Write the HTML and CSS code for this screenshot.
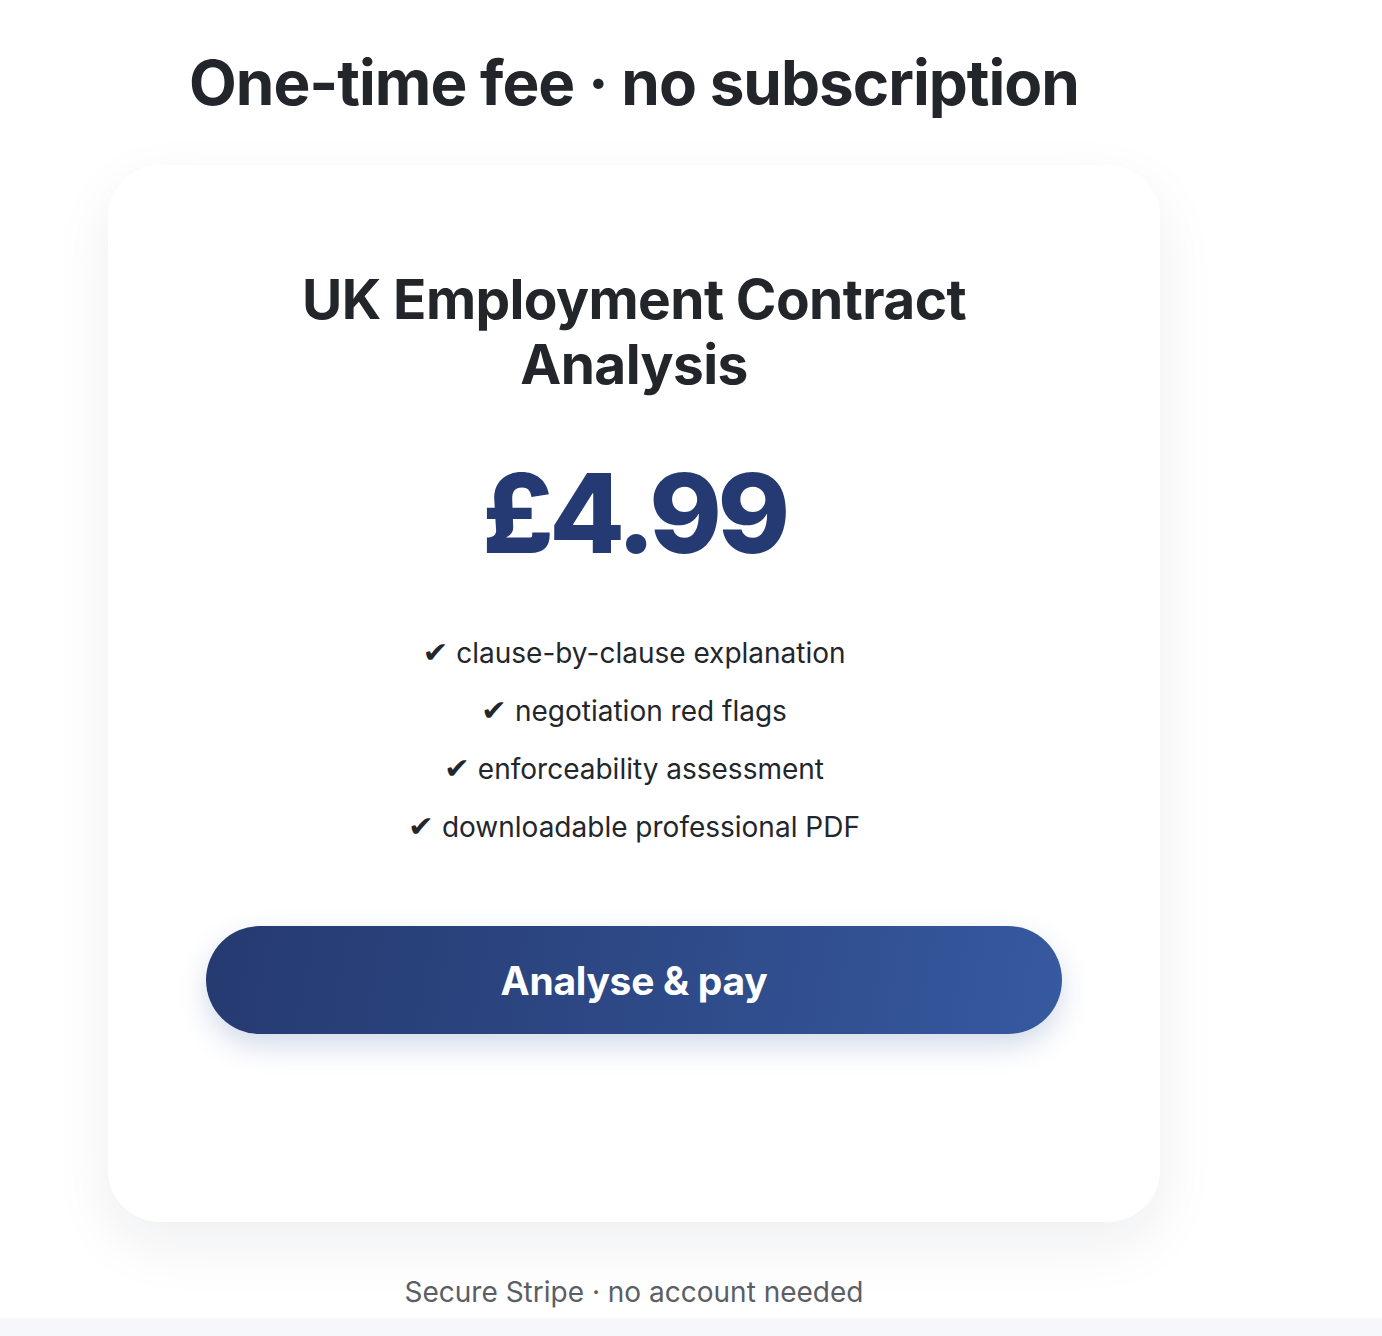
FILE: index.html
```html
<!DOCTYPE html>
<html lang="en">
<head>
<meta charset="utf-8">
<title>Pricing</title>
<link rel="stylesheet" href="styles.css">
</head>
<body>
<section class="pricing">
  <div class="wrap">
    <h2 class="heading">One-time fee · no subscription</h2>
    <div class="card">
      <h3 class="title">UK Employment Contract<br>Analysis</h3>
      <div class="price">£4.99</div>
      <ul class="features">
        <li><span class="tick">✔</span> clause-by-clause explanation</li>
        <li><span class="tick">✔</span> negotiation red flags</li>
        <li><span class="tick">✔</span> enforceability assessment</li>
        <li><span class="tick">✔</span> downloadable professional PDF</li>
      </ul>
      <button class="cta" type="button">Analyse &amp; pay</button>
    </div>
    <p class="note">Secure Stripe · no account needed</p>
  </div>
</section>
<div class="next"></div>
</body>
</html>
```
FILE: styles.css
```css
* { box-sizing: border-box; }
html, body { margin: 0; padding: 0; background: #ffffff; }
body {
  font-family: Inter, "Noto Sans", sans-serif;
  color: #22252a;
}
.pricing {
  height: 1318px;
  overflow: hidden;
}
.wrap {
  width: 1052px;
  margin-left: 108px;
  text-align: center;
}
.heading {
  margin: 0;
  padding-top: 44px;
  font-size: 62px;
  line-height: 78px;
  font-weight: 700;
  letter-spacing: -1px;
  color: #22252a;
}
.card {
  margin-top: 43px;
  height: 1057px;
  background: #fff;
  border-radius: 52px;
  box-shadow: 0 22px 60px rgba(20, 30, 60, 0.07);
  padding: 102px 98px 0;
  display: flex;
  flex-direction: column;
  align-items: center;
}
.title {
  margin: 0;
  font-size: 55px;
  line-height: 65px;
  font-weight: 700;
  letter-spacing: -0.6px;
  color: #22252a;
}
.price {
  margin-top: 51px;
  font-size: 110px;
  line-height: 130px;
  font-weight: 800;
  letter-spacing: -4.5px;
  color: #253a72;
}
.features {
  list-style: none;
  margin: 46px 0 0;
  padding: 0;
  font-size: 28px;
  line-height: 58px;
  color: #23262b;
}
.features li {
  height: 58px;
}
.tick {
  font-family: "DejaVu Sans", sans-serif;
  font-size: 31px;
  line-height: 0;
  display: inline-block;
  transform: scaleY(0.92);
}
.cta {
  margin-top: 70px;
  width: 856px;
  height: 108px;
  border: 0;
  border-radius: 54px;
  background: linear-gradient(100deg, #253a70 0%, #2e4a88 55%, #3659a0 100%);
  color: #fff;
  font-family: Inter, "Noto Sans", sans-serif;
  font-size: 39px;
  font-weight: 700;
  letter-spacing: -0.3px;
  box-shadow: 0 12px 28px rgba(53, 89, 160, 0.22);
}
.note {
  margin: 52px 0 0;
  font-size: 28px;
  line-height: 36px;
  color: #5b5e64;
}
.next {
  height: 18px;
  background: #f6f7fb;
}
```
